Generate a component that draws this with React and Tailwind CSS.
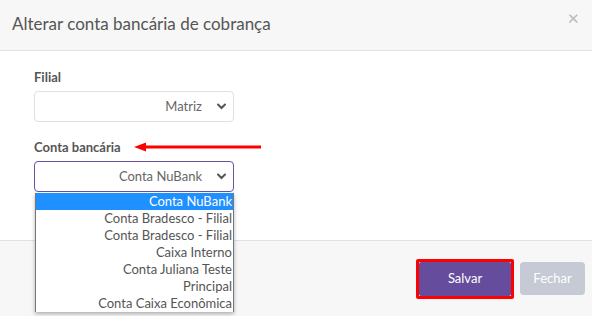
import React from "react";

const contas = [
  "Conta NuBank",
  "Conta Bradesco - Filial",
  "Conta Bradesco - Filial",
  "Caixa Interno",
  "Conta Juliana Teste",
  "Principal",
  "Conta Caixa Econômica",
];

function Chevron() {
  return (
    <svg width="9" height="7" viewBox="0 0 9 7" className="shrink-0">
      <path d="M1 1.5 L4.5 5 L8 1.5" fill="none" stroke="#555" strokeWidth="2" strokeLinecap="round" />
    </svg>
  );
}

export default function App() {
  return (
    <div className="w-[592px] h-[316px] bg-white overflow-hidden relative font-['Lato','Noto_Sans',sans-serif]">
      {/* cabeçalho */}
      <div className="h-[51px] bg-[#f7f7f7] border-b border-[#e2e2e2] flex items-center justify-between pl-[12px] pr-[12px]">
        <h2 className="text-[17px] text-[#555] pb-[2px]">Alterar conta bancária de cobrança</h2>
        <span className="text-[#bbb] text-[15px] pb-[14px] leading-none">✕</span>
      </div>

      {/* corpo */}
      <div className="h-[189px] px-[34px] pt-[17px]">
        <label className="block text-[13px] font-bold text-[#555] leading-[18px]">Filial</label>
        <div className="mt-[5px] w-[200px] h-[31px] border border-[#e0e0e0] rounded-[4px] flex items-center justify-end gap-[15px] pr-[7px] text-[13px] text-[#666]">
          <span>Matriz</span>
          <Chevron />
        </div>

        <div className="mt-[16px] flex items-center">
          <label className="text-[13px] font-bold text-[#555] leading-[18px]">Conta bancária</label>
          <svg width="128" height="12" viewBox="0 0 128 12" className="ml-[13px]">
            <path d="M10 6 H127" stroke="#f00" strokeWidth="3" />
            <path d="M0 6 L12 1.5 L12 10.5 Z" fill="#f00" />
          </svg>
        </div>
        <div className="mt-[5px] w-[200px] h-[31px] border border-[#6a51a3] rounded-[4px] flex items-center justify-end gap-[15px] pr-[7px] text-[13px] text-[#666]">
          <span>Conta NuBank</span>
          <Chevron />
        </div>
      </div>

      {/* rodapé */}
      <div className="h-[76px] bg-[#f7f7f7] border-t border-[#e2e2e2] flex items-start justify-end gap-[6px] pr-[7px] pt-[18px]">
        <div className="border-[3px] border-[#f00] rounded-[2px]">
          <button className="w-[92px] h-[34px] bg-[#664c9c] text-white text-[13px] rounded-[2px]">Salvar</button>
        </div>
        <button className="mt-[3px] w-[65px] h-[33px] bg-[#c6cad4] text-white text-[13px] rounded-[4px]">Fechar</button>
      </div>

      {/* lista aberta do select */}
      <div className="absolute left-[35px] top-[193px] w-[199px] bg-white border-x border-[#767676] shadow-[0_2px_4px_rgba(0,0,0,0.3)]">
        {contas.map((c, i) => (
          <div
            key={i}
            className={
              i === 0
                ? "h-[17px] leading-[17px] text-right pr-[1px] text-[13px] bg-[#1e90ff] text-white"
                : "h-[17px] leading-[17px] text-right pr-[1px] text-[13px] text-[#555]"
            }
          >
            {c}
          </div>
        ))}
      </div>
    </div>
  );
}
